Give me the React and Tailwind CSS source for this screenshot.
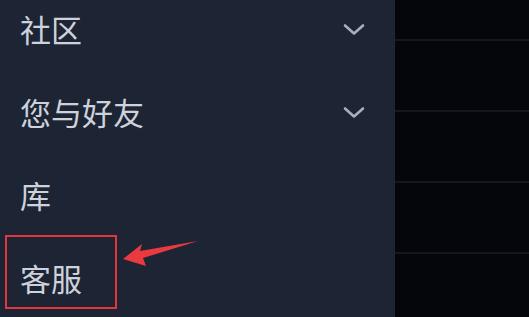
import React from "react";

const Chevron = () => (
  <svg width="24" height="16" viewBox="0 0 24 16" fill="none">
    <path d="M3 4.5 L12 12.5 L21 4.5" stroke="#a9afba" strokeWidth="2.6" strokeLinecap="round" strokeLinejoin="round" />
  </svg>
);

const items = [
  { label: "社区", chevron: true },
  { label: "您与好友", chevron: true },
  { label: "库", chevron: false },
  { label: "客服", chevron: false },
];

export default function App() {
  return (
    <div className="relative flex h-[317px] w-[529px] overflow-hidden bg-[#04060b]" style={{ fontFamily: '"Noto Sans CJK SC", "Noto Sans", sans-serif' }}>
      <div className="w-[395px] shrink-0 bg-[#1d2433]">
        <div className="-mt-[13px] flex flex-col">
          {items.map((it) => (
            <div key={it.label} className="flex h-[83px] items-center justify-between pl-[20px] pr-[29px]">
              <span className="text-[31px] font-normal leading-none text-[#cdd2dc]">{it.label}</span>
              {it.chevron && <Chevron />}
            </div>
          ))}
        </div>
      </div>
      <div className="flex-1">
        <div className="-mt-[30px] flex flex-col">
          {[0, 1, 2, 3, 4].map((i) => (
            <div key={i} className="h-[71px] border-b-2 border-[#14181e]" />
          ))}
        </div>
      </div>
      <div className="absolute left-[5px] top-[235px] h-[74px] w-[112px] border-2 border-[#e2363e]" />
      <svg className="absolute left-0 top-0" width="529" height="317" viewBox="0 0 529 317">
        <polygon points="123,259 142,244 140,251 198,241 143,258 146,266" fill="#ea3a40" />
      </svg>
    </div>
  );
}
